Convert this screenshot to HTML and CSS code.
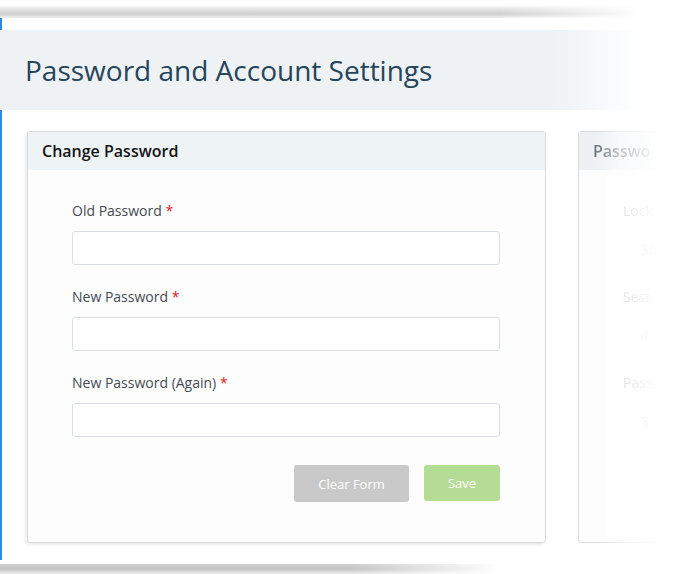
FILE: index.html
```html
<!DOCTYPE html>
<html>
<head>
<meta charset="utf-8">
<link rel="stylesheet" href="styles.css">
</head>
<body>
<div class="sheet">
  <div class="tear-top"></div>
  <div class="frame">
    <div class="page-head">
      <h1 class="page-title">Password and Account Settings</h1>
    </div>
    <div class="cards">
      <section class="card">
        <div class="card-head">Change Password</div>
        <form class="card-body">
          <label class="field-label">Old Password <span class="req">*</span></label>
          <div class="input"></div>
          <label class="field-label">New Password <span class="req">*</span></label>
          <div class="input"></div>
          <label class="field-label">New Password (Again) <span class="req">*</span></label>
          <div class="input"></div>
          <div class="actions">
            <span class="btn btn-clear">Clear Form</span>
            <span class="btn btn-save">Save</span>
          </div>
        </form>
      </section>
      <section class="card card-faded">
        <div class="card-head card-head-faded">Passwo</div>
        <div class="card-body faded-body">
          <div class="field-label faded-label">Lock</div>
          <div class="faded-value">30</div>
          <div class="field-label faded-label">Sess</div>
          <div class="faded-value">4</div>
          <div class="field-label faded-label">Pass</div>
          <div class="faded-value">3</div>
        </div>
      </section>
    </div>
  </div>
  <div class="tear-bottom"></div>
</div>
</body>
</html>
```

FILE: styles.css
```css
html, body {
  margin: 0;
  padding: 0;
  background: #ffffff;
  font-family: "Open Sans", "Liberation Sans", sans-serif;
  overflow: hidden;
}

.sheet {
  width: 694px;
  height: 574px;
  display: flex;
  flex-direction: column;
  overflow: hidden;
}

.tear-top {
  height: 13px;
  flex: none;
  margin-top: 5px;
  width: 640px;
  background: linear-gradient(to bottom, #ffffff 0, #e4e4e4 30%, #cfcfcf 70%, #f2f2f2 100%);
  -webkit-mask-image: linear-gradient(to right, #000 0, #000 78%, transparent 100%);
  mask-image: linear-gradient(to right, #000 0, #000 78%, transparent 100%);
}

.frame {
  flex: none;
  height: 542px;
  border-left: 2px solid #2a8be0;
  display: flex;
  flex-direction: column;
}

.page-head {
  margin-top: 12px;
  height: 80px;
  width: 640px;
  margin-left: -2px;
  padding-left: 25px;
  box-sizing: border-box;
  display: flex;
  align-items: center;
  background: linear-gradient(to right, #eef2f5 0, #eef2f5 86%, #ffffff 100%);
}

.page-title {
  margin: 0;
  font-size: 28px;
  font-weight: 400;
  color: #26445a;
  padding-bottom: 1px;
}

.cards {
  margin-top: 21px;
  padding-left: 25px;
  display: flex;
  gap: 32px;
  align-items: flex-start;
}

.card {
  flex: none;
  width: 519px;
  height: 412px;
  box-sizing: border-box;
  border: 1px solid #dadada;
  border-radius: 3px;
  background: #fdfdfd;
  box-shadow: -2px 2px 3px rgba(0, 0, 0, 0.08);
  display: flex;
  flex-direction: column;
}

.card-head {
  height: 38px;
  flex: none;
  background: #eef3f6;
  display: flex;
  align-items: center;
  padding-left: 14px;
  font-size: 16px;
  font-weight: 600;
  color: #151515;
  border-radius: 3px 3px 0 0;
}

.card-body {
  margin: 0;
  padding: 31px 45px 0 44px;
  display: flex;
  flex-direction: column;
}

.field-label {
  font-size: 14px;
  line-height: 20px;
  color: #444b52;
  margin-bottom: 10px;
  white-space: nowrap;
}

.req {
  color: #e0202a;
}

.input {
  height: 34px;
  box-sizing: border-box;
  border: 1px solid #dadee3;
  border-radius: 3px;
  background: #ffffff;
  margin-bottom: 22px;
}

.actions {
  margin-top: 6px;
  display: flex;
  justify-content: flex-end;
  gap: 15px;
}

.btn {
  height: 37px;
  display: flex;
  align-items: center;
  justify-content: center;
  font-size: 13px;
  color: #ffffff;
  border-radius: 3px;
}

.btn-clear {
  width: 115px;
  background: #c9c9c9;
}

.btn-save {
  width: 76px;
  height: 36px;
  background: #b5dc95;
}

.card-faded {
  width: 110px;
  overflow: hidden;
  -webkit-mask-image: linear-gradient(to right, #000 0, #000 18px, rgba(0,0,0,0.45) 40px, transparent 82px);
  mask-image: linear-gradient(to right, #000 0, #000 18px, rgba(0,0,0,0.45) 40px, transparent 82px);
}

.card-head-faded {
  color: #6e7880;
  font-weight: 600;
  background: #eef1f3;
  white-space: nowrap;
}

.faded-body {
  padding-right: 0;
}

.faded-label {
  color: #b8b8b8;
}

.faded-value {
  font-size: 14px;
  line-height: 20px;
  color: #c8c8c8;
  padding-left: 18px;
  margin-top: 9px;
  margin-bottom: 27px;
}

.tear-bottom {
  flex: none;
  height: 10px;
  width: 500px;
  margin-top: 4px;
  background: linear-gradient(to bottom, #d0d0d0 0, #c4c4c4 50%, #ececec 100%);
  -webkit-mask-image: linear-gradient(to right, #000 0, #000 70%, transparent 100%);
  mask-image: linear-gradient(to right, #000 0, #000 70%, transparent 100%);
}
```
